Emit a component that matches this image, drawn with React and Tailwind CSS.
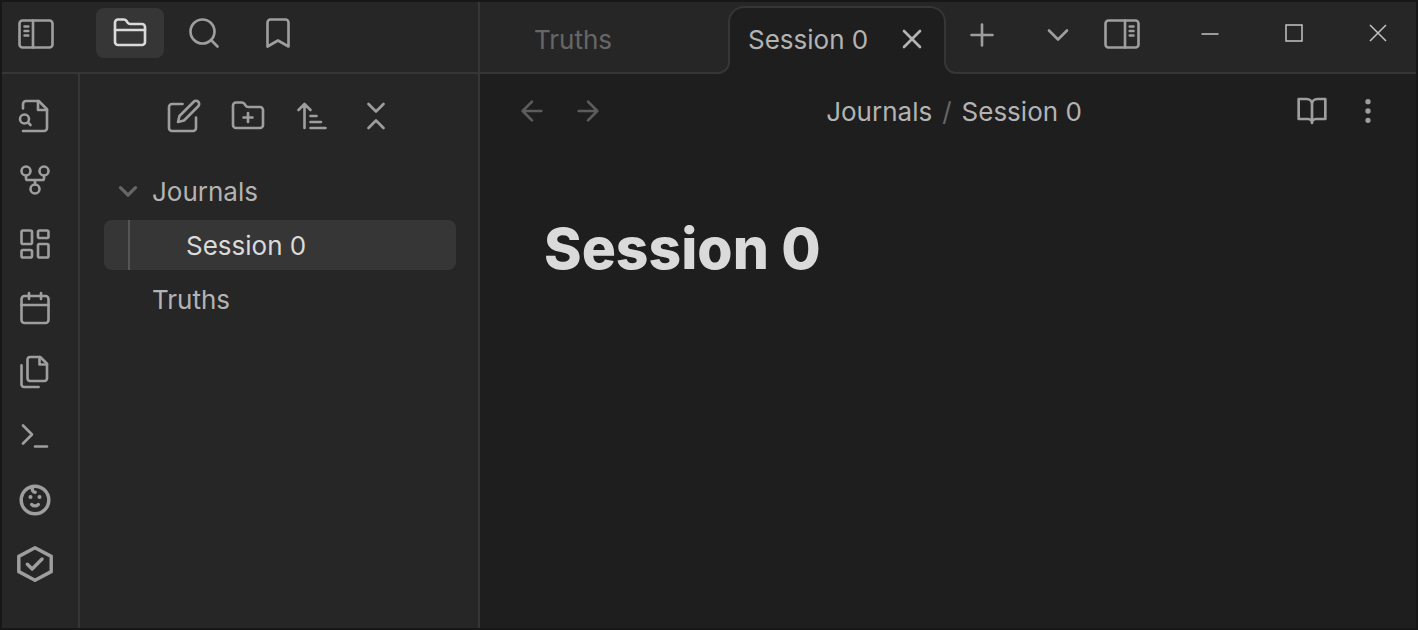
import React from "react";

function Icon({ size = "size-9", stroke = 1.75, children }) {
  return (
    <svg
      viewBox="0 0 24 24"
      className={"block shrink-0 " + size}
      fill="none"
      stroke="currentColor"
      strokeWidth={stroke}
      strokeLinecap="round"
      strokeLinejoin="round"
      aria-hidden="true"
    >
      {children}
    </svg>
  );
}

const folderOutline =
  "M4 20h16a2 2 0 0 0 2-2V8a2 2 0 0 0-2-2h-7.93a2 2 0 0 1-1.66-.9l-.82-1.2A2 2 0 0 0 7.93 3H4a2 2 0 0 0-2 2v13c0 1.1.9 2 2 2Z";

const icons = {
  leftPanel: (
    <>
      <rect x="1" y="3" width="22" height="18" rx="2" />
      <path d="M10 3v18" />
      <path d="M4.3 7h2.6M4.3 10h2.6M4.3 13h2.6" strokeWidth="1.6" />
    </>
  ),
  rightPanel: (
    <>
      <rect x="1" y="3" width="22" height="18" rx="2" />
      <path d="M14 3v18" />
      <path d="M17.1 7h2.6M17.1 10h2.6M17.1 13h2.6" strokeWidth="1.6" />
    </>
  ),
  folder: (
    <>
      <path d={folderOutline} />
      <path d="M2 10h20" />
    </>
  ),
  search: (
    <>
      <circle cx="11" cy="11" r="8" />
      <path d="m21 21-4.3-4.3" />
    </>
  ),
  bookmark: <path d="m19 21-7-4-7 4V5a2 2 0 0 1 2-2h10a2 2 0 0 1 2 2v16z" />,
  fileSearch: (
    <>
      <path d="M4 22h14a2 2 0 0 0 2-2V7.5L14.5 2H6a2 2 0 0 0-2 2v3" />
      <path d="M14 2v6h6" />
      <circle cx="5" cy="14" r="3" />
      <path d="m9 18-1.5-1.5" />
    </>
  ),
  graph: (
    <>
      <circle cx="12" cy="18" r="3" />
      <circle cx="6" cy="6" r="3" />
      <circle cx="18" cy="6" r="3" />
      <path d="M18 9v2c0 .6-.4 1-1 1H7c-.6 0-1-.4-1-1V9M12 12v3" />
    </>
  ),
  dashboard: (
    <>
      <rect x="3" y="3" width="7" height="9" rx="1" />
      <rect x="14" y="3" width="7" height="5" rx="1" />
      <rect x="14" y="12" width="7" height="9" rx="1" />
      <rect x="3" y="16" width="7" height="5" rx="1" />
    </>
  ),
  calendar: (
    <>
      <rect x="3" y="4" width="18" height="18" rx="2" />
      <path d="M16 2v4M8 2v4M3 10h18" />
    </>
  ),
  files: (
    <>
      <path d="M15.5 2H8.6c-.4 0-.8.2-1.1.5-.3.3-.5.7-.5 1.1v12.8c0 .4.2.8.5 1.1.3.3.7.5 1.1.5h9.8c.4 0 .8-.2 1.1-.5.3-.3.5-.7.5-1.1V6.5L15.5 2z" />
      <path d="M3 7.6v12.8c0 .4.2.8.5 1.1.3.3.7.5 1.1.5h9.8M15 2v5h5" />
    </>
  ),
  terminal: <path d="m4 17 6-6-6-6M12 19h8" />,
  kid: (
    <>
      <circle cx="12" cy="12" r="9.2" strokeWidth="2.3" />
      <path d="M9 10h.01M15 10h.01" strokeWidth="2.7" />
      <path d="M9.8 15c1.2 1.2 3.2 1.2 4.4 0M10.4 3.6c-.7 1.7.2 3.2 1.7 3.2" strokeWidth="2.3" />
    </>
  ),
  hexCheck: (
    <>
      <path d="M12 1.2 22.8 6.9v10.2L12 22.8 1.2 17.1V6.9z" strokeWidth="2.3" />
      <path d="m6.9 12.2 3.2 3.1 6.6-6.6" strokeWidth="2.3" />
    </>
  ),
  edit: (
    <>
      <path d="M11 4H4a2 2 0 0 0-2 2v14a2 2 0 0 0 2 2h14a2 2 0 0 0 2-2v-7" />
      <path d="M18.5 2.5a2.121 2.121 0 0 1 3 3L12 15l-4 1 1-4 9.5-9.5z" />
    </>
  ),
  folderPlus: (
    <>
      <path d={folderOutline} />
      <path d="M12 10v6M9 13h6" />
    </>
  ),
  sort: <path d="m3 8 4-4 4 4M7 4v16M11 12h4M11 16h7M11 20h10" />,
  collapse: <path d="m7 20 5-5 5 5M7 4l5 5 5-5" />,
  caret: <path d="m3 8 9 9 9-9" />,
  close: <path d="M18 6 6 18M6 6l12 12" />,
  plus: <path d="M12 5v14M5 12h14" />,
  chevron: <path d="m6 9 6 6 6-6" />,
  back: <path d="m12 19-7-7 7-7M19 12H5" />,
  forward: <path d="m12 5 7 7-7 7M5 12h14" />,
  book: (
    <path d="M2 3h6a4 4 0 0 1 4 4v14a3 3 0 0 0-3-3H2zM22 3h-6a4 4 0 0 0-4 4v14a3 3 0 0 1 3-3h7z" />
  ),
  more: (
    <>
      <circle cx="12" cy="12" r="1" />
      <circle cx="12" cy="5" r="1" />
      <circle cx="12" cy="19" r="1" />
    </>
  ),
};

function IconButton({ label, icon, className = "", size, stroke }) {
  return (
    <button type="button" aria-label={label} className={"flex shrink-0 items-center justify-center " + className}>
      <Icon size={size} stroke={stroke}>
        {icons[icon]}
      </Icon>
    </button>
  );
}

function WindowButton({ label, children }) {
  return (
    <button type="button" aria-label={label} className="flex h-16 w-21 items-center justify-center text-[#c4c4c4]">
      <svg viewBox="0 0 20 20" className="size-5" fill="none" stroke="currentColor" strokeWidth="1.5" aria-hidden="true">
        {children}
      </svg>
    </button>
  );
}

function TabFoot({ className, line, fill }) {
  return (
    <svg viewBox="0 0 12 12" className={"absolute bottom-0 size-3 " + className} aria-hidden="true">
      <path d={fill} fill="#1e1e1e" />
      <path d={line} fill="none" stroke="#363636" strokeWidth="2" />
    </svg>
  );
}

const ribbon = [
  ["Open quick switcher", "fileSearch"],
  ["Open graph view", "graph"],
  ["Create new canvas", "dashboard"],
  ["Open today's daily note", "calendar"],
  ["Insert template", "files"],
  ["Open command palette", "terminal"],
  ["Characters", "kid"],
  ["Tasks", "hexCheck"],
];

export default function App() {
  return (
    <div className="flex min-h-screen flex-col border-2 border-[#171717] bg-[#262626] font-['Inter',sans-serif] text-[26px] leading-8 text-[#b3b3b3]">
      <header className="flex h-18 shrink-0">
        <div className="flex w-[478px] shrink-0 border-r-2 border-b-2 border-[#363636] text-[#9e9e9e]">
          <IconButton label="Toggle left sidebar" icon="leftPanel" className="h-16 w-17" />
          <div className="ml-[26px] flex gap-1.5 pt-1.5">
            <IconButton label="Files" icon="folder" className="h-[50px] w-17 rounded-lg bg-[#363636] text-[#dadada]" />
            <IconButton label="Search" icon="search" className="h-[50px] w-17" />
            <IconButton label="Bookmarks" icon="bookmark" className="h-[50px] w-17" />
          </div>
        </div>

        <div className="flex min-w-0 flex-1">
          <div className="w-[248px] shrink-0 border-b-2 border-[#363636] pt-[22px] pl-[54px]">
            <button type="button" className="text-[#666666]">Truths</button>
          </div>
          <div className="relative mt-1 flex w-[218px] shrink-0 items-center justify-between rounded-t-2xl border-2 border-b-0 border-[#363636] bg-[#1e1e1e] pr-4 pb-1 pl-[18px]">
            <button type="button" className="pt-0.5">Session 0</button>
            <IconButton label="Close tab" icon="close" size="size-8" stroke={2} />
            <TabFoot className="-left-3" line="M0 11A11 11 0 0 0 11 0" fill="M0 11A11 11 0 0 0 11 0H12V12H0Z" />
            <TabFoot className="-right-3" line="M1 0A11 11 0 0 0 12 11" fill="M1 0A11 11 0 0 0 12 11V12H0V0Z" />
          </div>
          <div className="flex min-w-0 flex-1 justify-between border-b-2 border-[#363636] text-[#9e9e9e]">
            <IconButton label="New tab" icon="plus" className="h-[66px] w-18" />
            <div className="flex">
              <IconButton label="Tab list" icon="chevron" className="h-[66px] w-16" />
              <IconButton label="Toggle right sidebar" icon="rightPanel" className="h-16 w-16" />
              <div className="-mr-1 ml-[14px] flex">
                <WindowButton label="Minimize">
                  <path d="M1.5 10h17" />
                </WindowButton>
                <WindowButton label="Maximize">
                  <rect x="2" y="1" width="16" height="16" />
                </WindowButton>
                <WindowButton label="Close">
                  <path d="m2 1 16 16M18 1 2 17" />
                </WindowButton>
              </div>
            </div>
          </div>
        </div>
      </header>

      <div className="flex flex-1">
        <nav className="flex w-[78px] shrink-0 flex-col gap-7 border-r-2 border-[#363636] pt-6 pl-[15px] text-[#9e9e9e]">
          {ribbon.map(([label, icon]) => (
            <IconButton key={icon} label={label} icon={icon} className="size-9" />
          ))}
        </nav>

        <aside className="w-[400px] shrink-0 border-r-2 border-[#363636] pt-6 pr-[22px] pl-6">
          <div className="flex justify-center gap-7 text-[#9e9e9e]">
            <IconButton label="New note" icon="edit" className="size-9" />
            <IconButton label="New folder" icon="folderPlus" className="size-9" />
            <IconButton label="Change sort order" icon="sort" className="size-9" />
            <IconButton label="Collapse all" icon="collapse" className="size-9" />
          </div>
          <div className="mt-8 flex flex-col gap-1">
            <button type="button" className="flex h-[50px] items-center gap-[14px] pl-[14px] text-left">
              <span className="text-[#666666]">
                <Icon size="size-5" stroke={4}>{icons.caret}</Icon>
              </span>
              <span className="pt-0.5">Journals</span>
            </button>
            <button type="button" className="flex h-[50px] items-center rounded-lg bg-[#363636] pl-6 text-left text-[#dadada]">
              <span className="h-full border-l-2 border-[#555555] pr-14" />
              <span className="pt-0.5">Session 0</span>
            </button>
            <button type="button" className="flex h-[50px] items-center pl-12 text-left">
              <span className="pt-0.5">Truths</span>
            </button>
          </div>
        </aside>

        <main className="min-w-0 flex-1 bg-[#1e1e1e]">
          <div className="flex h-[74px] items-center pr-5 pl-6">
            <div className="flex text-[#5c5c5c]">
              <IconButton label="Back" icon="back" className="h-12 w-14" size="size-8" stroke={2} />
              <IconButton label="Forward" icon="forward" className="h-12 w-14" size="size-8" stroke={2} />
            </div>
            <div className="flex flex-1 justify-center gap-[10px] pt-0.5 pl-2">
              <span>Journals</span>
              <span className="text-[#666666]">/</span>
              <span>Session 0</span>
            </div>
            <div className="flex text-[#9e9e9e]">
              <IconButton label="Reading view" icon="book" className="h-12 w-14" size="size-8" stroke={2} />
              <IconButton label="More options" icon="more" className="h-12 w-14" size="size-8" stroke={2} />
            </div>
          </div>
          <h1 className="px-16 pt-[65px] text-[57px] leading-[72px] font-extrabold text-[#dadada]">Session 0</h1>
        </main>
      </div>
    </div>
  );
}
